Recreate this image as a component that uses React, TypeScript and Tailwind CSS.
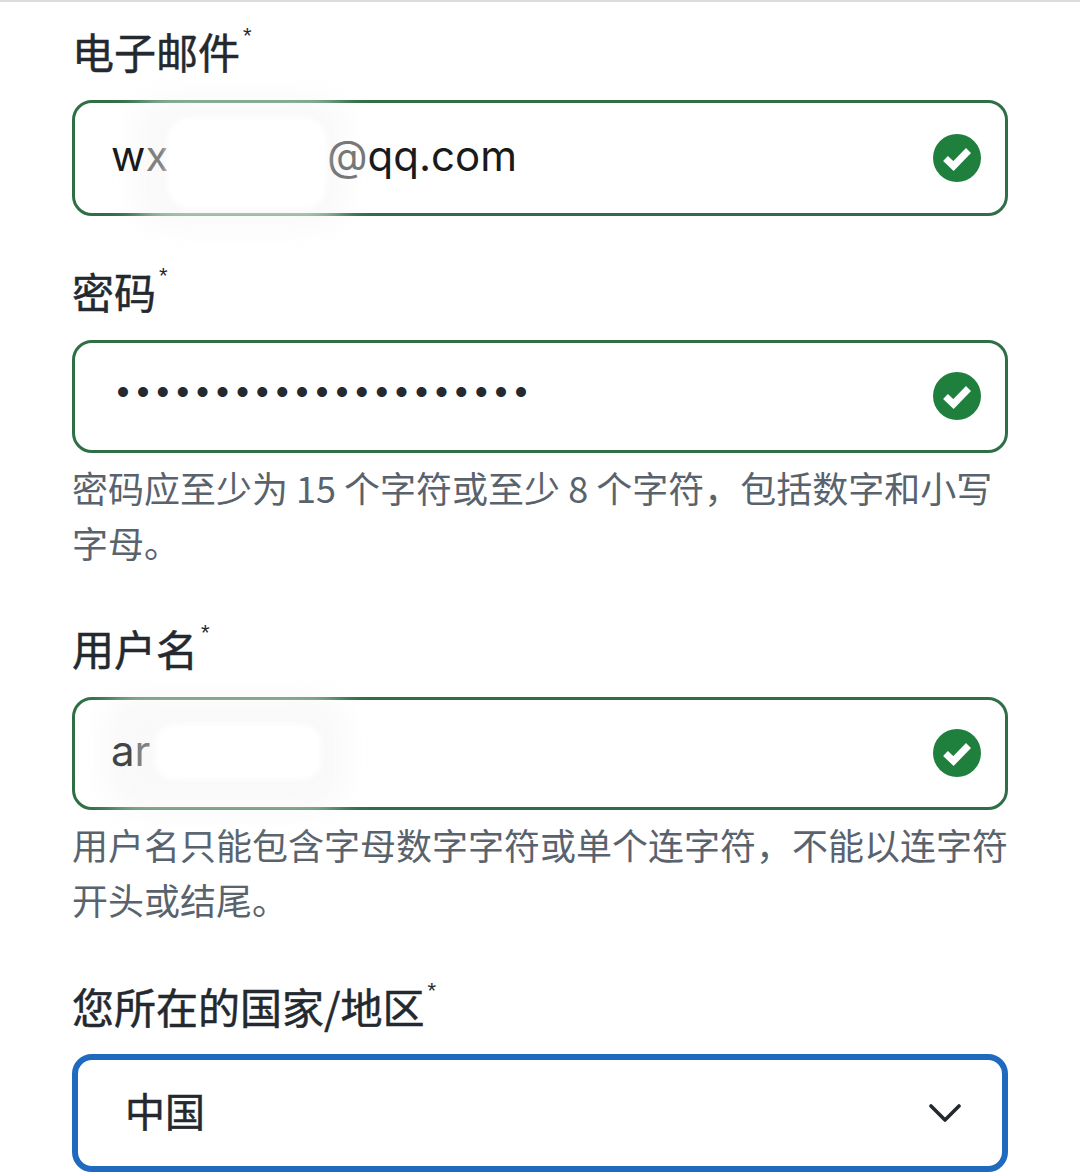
const cjk = "font-['Noto_Sans_CJK_SC','Noto_Sans',sans-serif]";

function CheckBadge() {
  return (
    <svg width="48" height="48" viewBox="0 0 48 48" className="relative shrink-0">
      <circle cx="24" cy="24" r="24" fill="#1f7f3d" />
      <path d="M12.5 24.5 L20.5 32 L35.5 16.5" fill="none" stroke="#fff" strokeWidth="7" />
    </svg>
  );
}

function Label({ text }: { text: string }) {
  return (
    <div className={`h-[50px] pb-[4px] flex items-center text-[42px] leading-[50px] [-webkit-text-stroke:0.5px_#24292f] text-[#24292f] ${cjk}`}>
      {text}
      <span className="self-start -mt-[7px] ml-[3px] text-[22px] leading-[30px] [-webkit-text-stroke:0] font-['Liberation_Sans',sans-serif]">*</span>
    </div>
  );
}

function Help({ children }: { children: React.ReactNode }) {
  return (
    <p className={`pt-[7px] pb-[3px] text-[36px] leading-[55px] text-[#59636e] ${cjk} whitespace-nowrap`}>{children}</p>
  );
}

function GreenInput({ h, children }: { h: string; children: React.ReactNode }) {
  return (
    <div className={`relative mt-[22px] ${h} flex items-center justify-between pl-[36px] pr-[24px] border-[3px] border-[#2f6f46] rounded-[20px] bg-white`}>
      {children}
      <CheckBadge />
    </div>
  );
}

export default function App() {
  return (
    <div className="relative w-[1080px] h-[1176px] overflow-hidden bg-white border-t-2 border-[#dcdcdc] px-[72px] pt-[26px] font-['Inter',sans-serif]">
      {/* email */}
      <Label text="电子邮件" />
      <GreenInput h="h-[116px]">
        {/* smudge over the address */}
        <div className="absolute left-[60px] top-[-6px] w-[210px] h-[130px] rounded-[30px] bg-[#f7f7f7]/70 blur-[14px]" />
        <div className="relative flex-1 -mt-[4px] text-[42px] leading-[56px] text-[#1a1a1a]">
          <span className="inline-block w-[216px]">
            w<span className="text-[#808080]">x</span>
          </span>
          <span className="text-[#777] ">@</span>qq.com
        </div>
        <div className="absolute left-[92px] top-[14px] w-[160px] h-[92px] rounded-[24px] bg-white blur-[3px]" />
      </GreenInput>

      {/* password */}
      <div className="mt-[52px]">
        <Label text="密码" />
        <GreenInput h="h-[113px] pb-[1px]">
          <div className="flex-1 -mt-[12px] ml-[3px] text-[32px] leading-[56px] tracking-[1.9px] text-[#24292f]">
            •••••••••••••••••••••
          </div>
        </GreenInput>
        <Help>
          密码应至少为 15 个字符或至少 8 个字符，包括数字和小写
          <br />
          字母。
        </Help>
      </div>

      {/* username */}
      <div className="mt-[52px]">
        <Label text="用户名" />
        <GreenInput h="h-[113px] pb-[1px]">
          {/* smudge over the name */}
          <div className="absolute left-[30px] top-[-5px] w-[240px] h-[116px] rounded-[30px] bg-[#f7f7f7]/70 blur-[14px]" />
          <div className="relative flex-1 -mt-[4px] text-[42px] leading-[56px] text-[#444]">
            a<span className="text-[#808080]">r</span>
          </div>
          <div className="absolute left-[80px] top-[24px] w-[166px] h-[56px] rounded-[20px] bg-white blur-[3px]" />
        </GreenInput>
        <Help>
          用户名只能包含字母数字字符或单个连字符，不能以连字符
          <br />
          开头或结尾。
        </Help>
      </div>

      {/* country */}
      <div className="mt-[53px]">
        <Label text="您所在的国家/地区" />
        <div className="mt-[21px] h-[118px] flex items-center justify-between pl-[47px] pr-[41px] border-[6px] border-[#1f69bf] rounded-[20px] bg-white">
          <span className={`-mt-[6px] text-[40px] leading-[50px] [-webkit-text-stroke:0.5px_#24292f] text-[#24292f] ${cjk}`}>中国</span>
          <svg width="32" height="20" viewBox="0 0 32 20">
            <path d="M2 3 L16 17 L30 3" fill="none" stroke="#24292f" strokeWidth="3.6" strokeLinecap="round" strokeLinejoin="round" />
          </svg>
        </div>
      </div>
    </div>
  );
}
